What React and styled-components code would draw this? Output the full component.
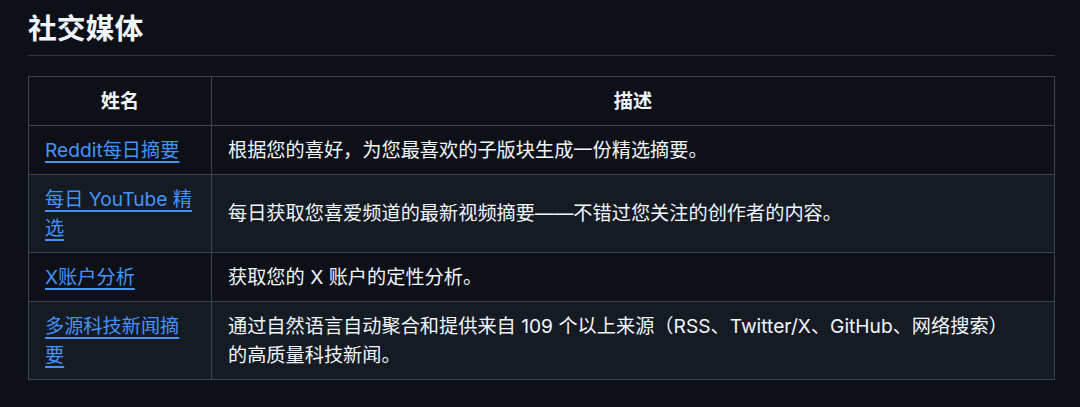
import React from 'react'
import styled, { createGlobalStyle } from 'styled-components'

const GlobalStyle = createGlobalStyle`
  html, body {
    margin: 0;
    padding: 0;
    background: #0d1117;
  }
  body {
    font-family: Inter, "Noto Sans CJK SC", sans-serif;
    color: #f0f6fc;
  }
`

const Page = styled.div`
  padding: 11px 25px 26px 28px;
  font-size: 19.2px;
  line-height: 29px;
`

const Heading = styled.h2`
  margin: 0 0 20px;
  padding-bottom: 8px;
  font-size: 28.8px;
  line-height: 36px;
  font-weight: 600;
  color: #f0f6fc;
  border-bottom: 1px solid #30363d;
`

const Table = styled.table`
  width: 100%;
  border-collapse: collapse;
  border-spacing: 0;
`

const Row = styled.tr`
  background: ${(p) => (p.$alt ? '#151b23' : '#0d1117')};
`

const Th = styled.th`
  border: 1px solid #3d444d;
  padding: 9.5px 16px;
  font-weight: 600;
  text-align: center;
  width: ${(p) => p.$width || 'auto'};
`

const Td = styled.td`
  border: 1px solid #3d444d;
  padding: 9.5px ${(p) => (p.$wide ? '48px' : '16px')} 9.5px 16px;
  vertical-align: middle;
`

const Link = styled.a`
  color: #4493f8;
  text-decoration: underline;
  text-underline-offset: 4px;
  text-decoration-thickness: 1.5px;
`

const rows = [
  ['Reddit每日摘要', '根据您的喜好，为您最喜欢的子版块生成一份精选摘要。'],
  ['每日 YouTube 精选', '每日获取您喜爱频道的最新视频摘要——不错过您关注的创作者的内容。'],
  ['X账户分析', '获取您的 X 账户的定性分析。'],
  ['多源科技新闻摘要', '通过自然语言自动聚合和提供来自 109 个以上来源（RSS、Twitter/X、GitHub、网络搜索）的高质量科技新闻。'],
]

export default function App() {
  return (
    <>
      <GlobalStyle />
      <Page>
        <Heading>社交媒体</Heading>
        <Table>
          <thead>
            <Row>
              <Th $width="150px">姓名</Th>
              <Th>描述</Th>
            </Row>
          </thead>
          <tbody>
            {rows.map(([name, desc], i) => (
              <Row key={name} $alt={i % 2 === 1}>
                <Td>
                  <Link href="#">{name}</Link>
                </Td>
                <Td $wide>{desc}</Td>
              </Row>
            ))}
          </tbody>
        </Table>
      </Page>
    </>
  )
}
